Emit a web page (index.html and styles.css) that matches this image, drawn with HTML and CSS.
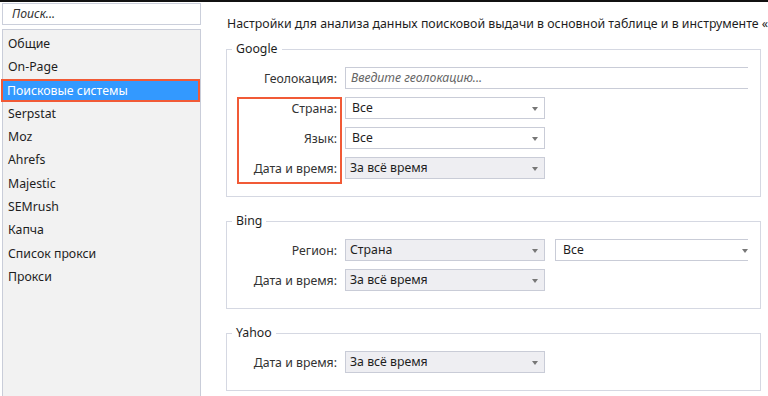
FILE: index.html
```html
<!DOCTYPE html>
<html lang="ru">
<head>
  <meta charset="UTF-8" />
  <meta name="viewport" content="width=device-width, initial-scale=1.0">
  <title>Настройки</title>

  <link rel="stylesheet" href="styles.css">
</head>

<body>

  <div class="topbar"></div>

  <div class="layout">
    <aside class="sidebar">
      <div class="search">Поиск...</div>
      <ul class="nav">
        <li>Общие</li>
        <li>On-Page</li>
        <li class="active">Поисковые системы</li>
        <li>Serpstat</li>
        <li>Moz</li>
        <li>Ahrefs</li>
        <li>Majestic</li>
        <li>SEMrush</li>
        <li>Капча</li>
        <li>Список прокси</li>
        <li>Прокси</li>
      </ul>
    </aside>

    <main class="content">
      <p class="intro">Настройки для анализа данных поисковой выдачи в основной таблице и в инструменте «</p>

      <fieldset class="group">
        <legend>Google</legend>
        <div class="fields">
          <div class="row">
            <label>Геолокация:</label>
            <div class="input wide placeholder">Введите геолокацию...</div>
          </div>
          <div class="marked"> <!-- orange frame around the three labels -->
            <div class="row">
              <label>Страна:</label>
              <div class="select">Все<span class="arrow"></span></div>
            </div>
            <div class="row">
              <label>Язык:</label>
              <div class="select">Все<span class="arrow"></span></div>
            </div>
            <div class="row">
              <label>Дата и время:</label>
              <div class="select grey">За всё время<span class="arrow"></span></div>
            </div>
          </div>
        </div>
      </fieldset>

      <fieldset class="group">
        <legend>Bing</legend>
        <div class="fields">
          <div class="row">
            <label>Регион:</label>
            <div class="select grey">Страна<span class="arrow"></span></div>
            <div class="select second">Все<span class="arrow"></span></div>
          </div>
          <div class="row">
            <label>Дата и время:</label>
            <div class="select grey">За всё время<span class="arrow"></span></div>
          </div>
        </div>
      </fieldset>

      <fieldset class="group">
        <legend>Yahoo</legend>
        <div class="fields">
          <div class="row">
            <label>Дата и время:</label>
            <div class="select grey">За всё время<span class="arrow"></span></div>
          </div>
        </div>
      </fieldset>
    </main>
  </div>

</body>
</html>
```

FILE: styles.css
```css
body {
  margin: 0;
  padding: 0;
  background-color: white;
  font-family: "Noto Sans", "Open Sans", sans-serif;
  font-size: 12.3px;
  color: #1e1e1e;
  overflow: hidden;
  height: 396px;
}

.topbar {
  height: 2px;
  background-color: #111;
}

.layout {
  display: flex;
  align-items: flex-start;
}

/* left column */

.sidebar {
  flex: 0 0 199px;
  margin-left: 2px;
  padding-top: 1px;
}

.search {
  height: 22px;
  box-sizing: border-box;
  border: 1px solid #cbcfdb;
  padding-left: 9px;
  line-height: 20px;
  font-style: italic;
  color: #333;
}

.nav {
  list-style: none;
  margin: 4px 0 0 0;
  padding: 2px 0 0 0;
  height: 380px;
  border: 1px solid #c9cdd9;
  background-color: #f2f2f2;
}

.nav li {
  height: 23.3px;
  line-height: 23.3px;
  padding-left: 5px;
  white-space: nowrap;
}

.nav li.active {
  margin-left: -2px;
  padding-left: 6px;
  background-color: #3399ff;
  color: white;
  box-shadow: inset 0 0 0 2px #f15a36;
}

/* right column */

.content {
  flex: 1;
  min-width: 0;
  padding-left: 25px;
}

.intro {
  margin: 13px 0 7px 1px;
  line-height: 18px;
  white-space: nowrap;
  font-size: 12.35px;
}

.group {
  width: 535px;
  box-sizing: border-box;
  margin: 0 0 15px 0;
  padding: 9px 0 17px 10px;
  border: 1px solid #d5d8e2;
}

.group legend {
  margin-left: -5px;
  padding: 0 4px;
  line-height: 18px;
}

.fields {
  width: 511px;
  overflow-x: clip;
  overflow-y: visible;
}

.row {
  display: flex;
  align-items: center;
  height: 22px;
  margin-bottom: 8px;
}

.row:last-child {
  margin-bottom: 0;
}

.row label {
  width: 100px;
  flex-shrink: 0;
  margin-right: 8px;
  text-align: right;
  color: #333;
  white-space: nowrap;
}

.marked {
  position: relative;
  margin-top: 7px;
}

.marked::before {
  content: "";
  position: absolute;
  top: 0;
  left: 0;
  width: 105px;
  height: 87px;
  box-sizing: border-box;
  border: 2px solid #f15a36;
}

.input,
.select {
  position: relative;
  flex-shrink: 0;
  width: 200px;
  height: 22px;
  box-sizing: border-box;
  border: 1px solid #c9ccd7;
  background-color: white;
  padding-left: 6px;
  line-height: 20px;
  white-space: nowrap;
}

.input.wide {
  width: 420px;
}

.placeholder {
  font-style: italic;
  color: #666;
  padding-left: 5px;
}

.select.grey {
  background-color: #eeeef2;
  padding-left: 4px;
}

.select.second {
  margin-left: 10px;
  padding-left: 7px;
}

.arrow {
  position: absolute;
  right: 6px;
  top: 9px;
  border-left: 3px solid transparent;
  border-right: 3px solid transparent;
  border-top: 4px solid #777;
}
```
